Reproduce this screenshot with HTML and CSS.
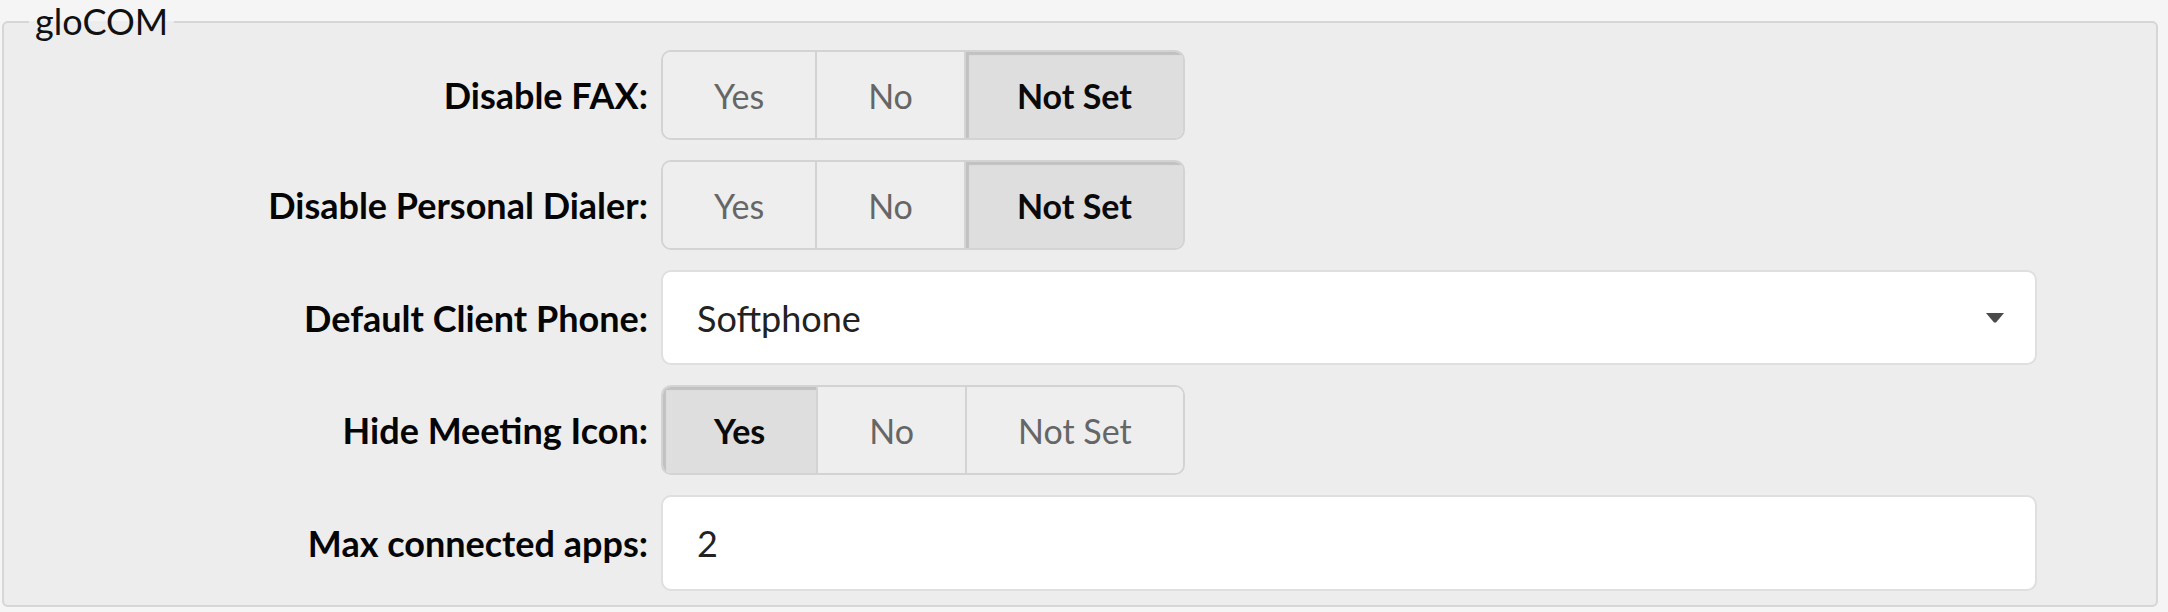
FILE: index.html
```html
<!DOCTYPE html>
<html lang="en">
<head>
<meta charset="utf-8">
<title>gloCOM</title>
<link rel="stylesheet" href="styles.css">
</head>
<body>
<fieldset class="group">
  <legend class="group-title">gloCOM</legend>
  <div class="form">
    <label class="row-label">Disable FAX:</label>
    <div class="row-control">
      <div class="toggle">
        <button class="toggle-btn">Yes</button>
        <button class="toggle-btn">No</button>
        <button class="toggle-btn is-active">Not Set</button>
      </div>
    </div>

    <label class="row-label">Disable Personal Dialer:</label>
    <div class="row-control">
      <div class="toggle">
        <button class="toggle-btn">Yes</button>
        <button class="toggle-btn">No</button>
        <button class="toggle-btn is-active">Not Set</button>
      </div>
    </div>

    <label class="row-label">Default Client Phone:</label>
    <div class="row-control">
      <div class="select">
        <span class="select-value">Softphone</span>
        <svg class="select-arrow" width="18" height="10" viewBox="0 0 18 10"><path d="M0 0 H18 L10 9.5 H8 Z" fill="#4a4a4a"/></svg>
      </div>
    </div>

    <label class="row-label">Hide Meeting Icon:</label>
    <div class="row-control">
      <div class="toggle">
        <button class="toggle-btn is-active">Yes</button>
        <button class="toggle-btn">No</button>
        <button class="toggle-btn">Not Set</button>
      </div>
    </div>

    <label class="row-label">Max connected apps:</label>
    <div class="row-control">
      <input class="text-input" type="text" value="2">
    </div>
  </div>
</fieldset>
</body>
</html>
```

FILE: styles.css
```css
* { box-sizing: border-box; }

html, body {
  margin: 0;
  padding: 0;
  background: #f5f5f5;
  font-family: Lato, "Open Sans", sans-serif;
}

.group {
  margin: 0 10px 6px 2px;
  padding: 7px 0 14px 0;
  border: 2px solid #d6d6d6;
  border-radius: 6px;
  background: #ededed;
  min-width: 0;
}

.group-title {
  margin-left: 25px;
  padding: 0 6px;
  font-size: 36px;
  line-height: 43px;
  color: #111;
}

.form {
  display: grid;
  grid-template-columns: 657px 1376px;
  row-gap: 20px;
  align-items: center;
}

.row-label {
  text-align: right;
  padding-right: 13px;
  font-size: 36px;
  font-weight: 700;
  color: #050505;
}

.row-control {
  display: flex;
}

.toggle {
  display: inline-flex;
  height: 90px;
  border: 2px solid #d3d3d3;
  border-radius: 10px;
  overflow: hidden;
  background: #eeeeee;
}

.toggle-btn {
  margin: 0;
  padding: 0 51px;
  border: 0;
  border-left: 2px solid #d3d3d3;
  background: #eeeeee;
  font-family: Lato, "Open Sans", sans-serif;
  font-size: 34px;
  color: #666;
}

.toggle-btn:first-child {
  border-left: 0;
}

.toggle-btn.is-active {
  background: #dedede;
  color: #0a0a0a;
  font-weight: 700;
  box-shadow: inset 4px 4px 1px -1px rgba(0, 0, 0, 0.13);
}

.select {
  width: 100%;
  height: 95px;
  display: flex;
  align-items: center;
  justify-content: space-between;
  padding: 0 31px 0 34px;
  background: #fff;
  border: 2px solid #dfdfdf;
  border-radius: 10px;
}

.select-value {
  font-size: 36px;
  color: #222;
}

.select-arrow {
  display: block;
}

.text-input {
  width: 100%;
  height: 96px;
  margin: 0;
  padding: 0 34px;
  background: #fff;
  border: 2px solid #dfdfdf;
  border-radius: 10px;
  font-family: Lato, "Open Sans", sans-serif;
  font-size: 36px;
  color: #222;
  outline: none;
}
```
